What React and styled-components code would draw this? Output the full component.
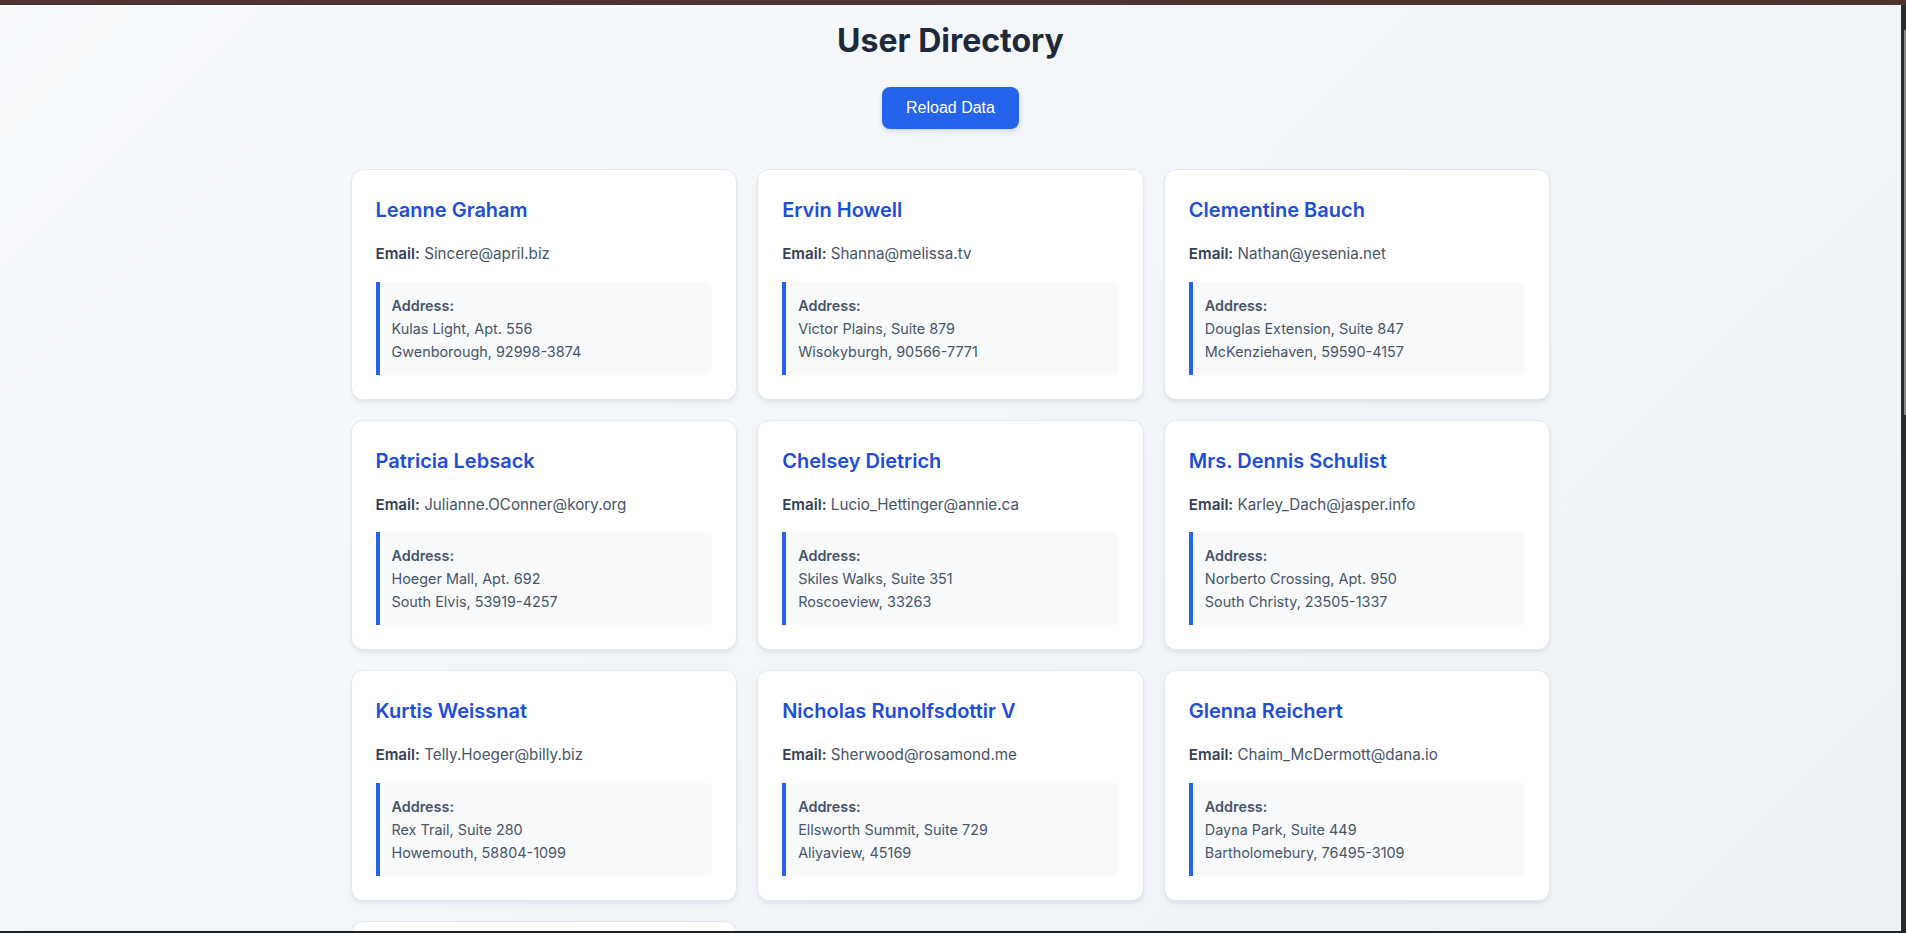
import React from 'react';
import styled, { createGlobalStyle } from 'styled-components';

const GlobalStyle = createGlobalStyle`
  * {
    box-sizing: border-box;
  }
  html,
  body {
    margin: 0;
    padding: 0;
    height: 100%;
    overflow: hidden;
  }
  body {
    font-family: Inter, "Noto Sans", sans-serif;
    line-height: 1.6;
    color: #334155;
  }
`;

const users = [
  { name: 'Leanne Graham', email: 'Sincere@april.biz', street: 'Kulas Light, Apt. 556', city: 'Gwenborough, 92998-3874' },
  { name: 'Ervin Howell', email: 'Shanna@melissa.tv', street: 'Victor Plains, Suite 879', city: 'Wisokyburgh, 90566-7771' },
  { name: 'Clementine Bauch', email: 'Nathan@yesenia.net', street: 'Douglas Extension, Suite 847', city: 'McKenziehaven, 59590-4157' },
  { name: 'Patricia Lebsack', email: 'Julianne.OConner@kory.org', street: 'Hoeger Mall, Apt. 692', city: 'South Elvis, 53919-4257' },
  { name: 'Chelsey Dietrich', email: 'Lucio_Hettinger@annie.ca', street: 'Skiles Walks, Suite 351', city: 'Roscoeview, 33263' },
  { name: 'Mrs. Dennis Schulist', email: 'Karley_Dach@jasper.info', street: 'Norberto Crossing, Apt. 950', city: 'South Christy, 23505-1337' },
  { name: 'Kurtis Weissnat', email: 'Telly.Hoeger@billy.biz', street: 'Rex Trail, Suite 280', city: 'Howemouth, 58804-1099' },
  { name: 'Nicholas Runolfsdottir V', email: 'Sherwood@rosamond.me', street: 'Ellsworth Summit, Suite 729', city: 'Aliyaview, 45169' },
  { name: 'Glenna Reichert', email: 'Chaim_McDermott@dana.io', street: 'Dayna Park, Suite 449', city: 'Bartholomebury, 76495-3109' },
  { name: 'Clementina DuBuque', email: 'Rey.Padberg@karina.biz', street: 'Kattie Turnpike, Suite 198', city: 'Lebsackbury, 31428-2261' }
];

const Frame = styled.div`
  height: 100vh;
  display: flex;
  flex-direction: column;
  border-top: 5px solid #4f3330;
  border-bottom: 2px solid #202124;
`;

const Viewport = styled.div`
  flex: 1;
  min-height: 0;
  display: flex;
`;

const Main = styled.main`
  flex: 1;
  overflow: hidden;
  background: linear-gradient(135deg, #f8fafc 0%, #edf1f6 100%);
`;

const ScrollTrack = styled.div`
  width: 5px;
  background: #2b2b2b;
  padding-top: 25px;
  display: flex;
  justify-content: flex-end;
`;

const ScrollThumb = styled.div`
  width: 2px;
  height: 385px;
  background: #8a8a8a;
`;

const Container = styled.div`
  max-width: 1200px;
  margin: 0 auto;
  padding: 16px 0 40px;
  display: flex;
  flex-direction: column;
  align-items: center;
`;

const Title = styled.h1`
  margin: 0 0 26px;
  font-size: 32px;
  line-height: 40px;
  font-weight: 700;
  color: #1e293b;
`;

const ReloadButton = styled.button`
  margin: 0 0 40px;
  padding: 12px 24px;
  border: none;
  border-radius: 8px;
  background: #2563eb;
  color: #ffffff;
  font-family: "Liberation Sans", Arial, sans-serif;
  font-size: 16px;
  cursor: pointer;
  box-shadow: 0 2px 5px rgba(37, 99, 235, 0.2);
`;

const Grid = styled.div`
  width: 100%;
  display: grid;
  grid-template-columns: repeat(3, 1fr);
  gap: 20px;
`;

const Card = styled.div`
  background: #ffffff;
  border: 1px solid #e2e8f0;
  border-radius: 12px;
  padding: 24px;
  box-shadow: 0 4px 6px -1px rgba(15, 23, 42, 0.06), 0 2px 4px -1px rgba(15, 23, 42, 0.04);
`;

const Name = styled.h2`
  margin: 0 0 15px;
  font-size: 20px;
  line-height: 32px;
  font-weight: 600;
  color: #1d4ed8;
`;

const Email = styled.p`
  margin: 0 0 15px;
  font-size: 15.2px;
  line-height: 25.6px;
  color: #475569;
`;

const Label = styled.strong`
  font-weight: 600;
  color: #334155;
`;

const Address = styled.div`
  background: #f8fafc;
  border-left: 4px solid #2563eb;
  border-radius: 0 6px 6px 0;
  padding: 12px;
  font-size: 14.4px;
  color: #475569;
`;

const AddressLabel = styled.div`
  font-weight: 600;
`;

export default function App() {
  return (
    <>
      <GlobalStyle />
      <Frame>
        <Viewport>
          <Main>
            <Container>
              <Title>User Directory</Title>
              <ReloadButton>Reload Data</ReloadButton>
              <Grid>
                {users.map(user => (
                  <Card key={user.email}>
                    <Name>{user.name}</Name>
                    <Email>
                      <Label>Email:</Label> {user.email}
                    </Email>
                    <Address>
                      <AddressLabel>Address:</AddressLabel>
                      <div>{user.street}</div>
                      <div>{user.city}</div>
                    </Address>
                  </Card>
                ))}
              </Grid>
            </Container>
          </Main>
          <ScrollTrack>
            <ScrollThumb />
          </ScrollTrack>
        </Viewport>
      </Frame>
    </>
  );
}
